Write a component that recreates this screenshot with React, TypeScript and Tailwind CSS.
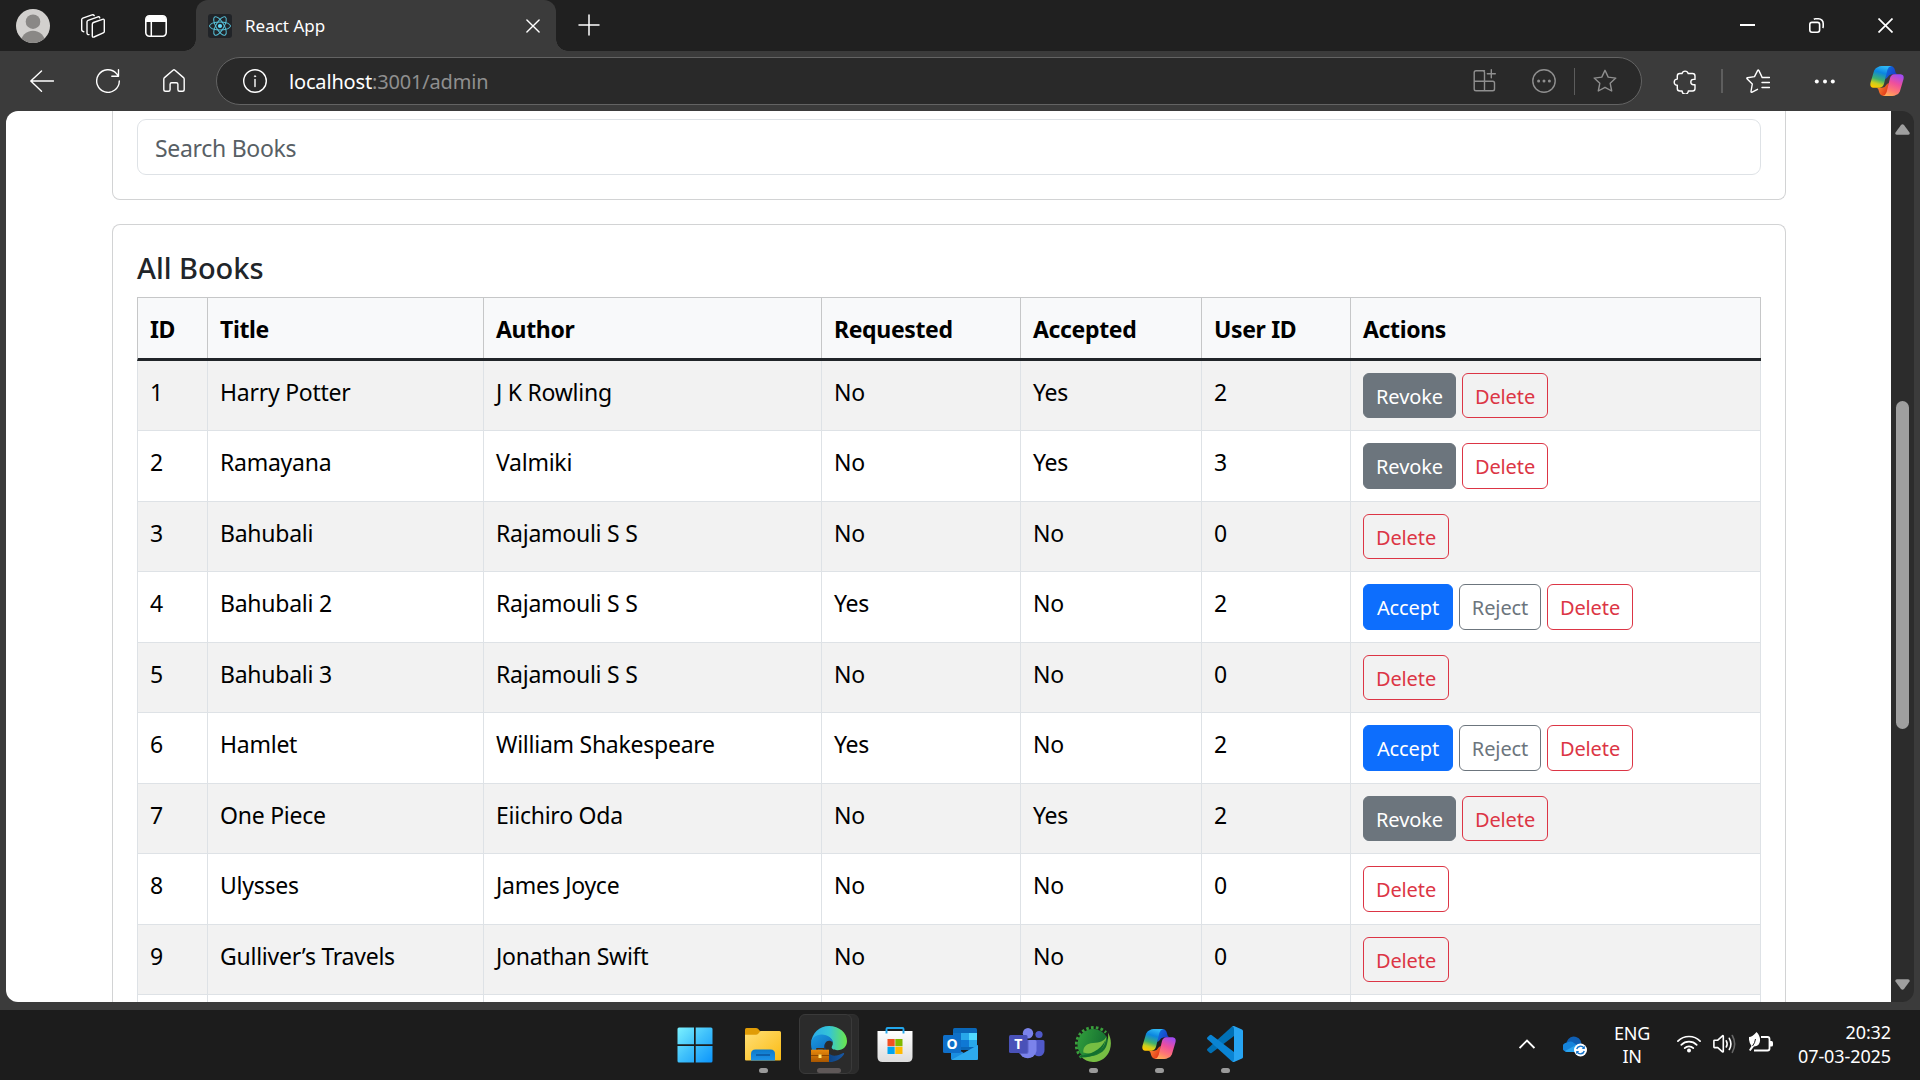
import React from "react";

type Kind = "revoke" | "accept" | "reject" | "delete";

type Book = {
  id: string;
  title: string;
  author: string;
  requested: string;
  accepted: string;
  user: string;
  actions: Kind[];
};

const books: Book[] = [
  { id: "1", title: "Harry Potter", author: "J K Rowling", requested: "No", accepted: "Yes", user: "2", actions: ["revoke", "delete"] },
  { id: "2", title: "Ramayana", author: "Valmiki", requested: "No", accepted: "Yes", user: "3", actions: ["revoke", "delete"] },
  { id: "3", title: "Bahubali", author: "Rajamouli S S", requested: "No", accepted: "No", user: "0", actions: ["delete"] },
  { id: "4", title: "Bahubali 2", author: "Rajamouli S S", requested: "Yes", accepted: "No", user: "2", actions: ["accept", "reject", "delete"] },
  { id: "5", title: "Bahubali 3", author: "Rajamouli S S", requested: "No", accepted: "No", user: "0", actions: ["delete"] },
  { id: "6", title: "Hamlet", author: "William Shakespeare", requested: "Yes", accepted: "No", user: "2", actions: ["accept", "reject", "delete"] },
  { id: "7", title: "One Piece", author: "Eiichiro Oda", requested: "No", accepted: "Yes", user: "2", actions: ["revoke", "delete"] },
  { id: "8", title: "Ulysses", author: "James Joyce", requested: "No", accepted: "No", user: "0", actions: ["delete"] },
  { id: "9", title: "Gulliver’s Travels", author: "Jonathan Swift", requested: "No", accepted: "No", user: "0", actions: ["delete"] },
];

const headings = ["ID", "Title", "Author", "Requested", "Accepted", "User ID", "Actions"];

const columns = "grid grid-cols-[70px_276px_338px_199px_181px_149px_410px]";

const buttonLook: Record<Kind, { label: string; look: string }> = {
  revoke: { label: "Revoke", look: "w-[93px] border-[#6c757d] bg-[#6c757d] text-white" },
  accept: { label: "Accept", look: "w-[90px] border-[#0d6efd] bg-[#0d6efd] text-white" },
  reject: { label: "Reject", look: "w-[82px] border-[#6c757d] text-[#6c757d]" },
  delete: { label: "Delete", look: "w-[86px] border-[#dc3545] text-[#dc3545]" },
};

/* ---------- Browser chrome ---------- */

function LineIcon({ className = "", children }: { className?: string; children: React.ReactNode }) {
  return (
    <svg
      width="24"
      height="24"
      viewBox="0 0 24 24"
      fill="none"
      stroke="currentColor"
      strokeWidth="1.4"
      strokeLinecap="round"
      strokeLinejoin="round"
      className={`shrink-0 ${className}`}
    >
      {children}
    </svg>
  );
}

function Copilot({ id }: { id: string }) {
  return (
    <svg width="34" height="30" viewBox="0 0 102 91" className="shrink-0">
      <defs>
        <linearGradient id={`${id}a`} x1="0.6" y1="0" x2="0.3" y2="1">
          <stop offset="0" stopColor="#2fb8f5" />
          <stop offset="0.3" stopColor="#0b86e0" />
          <stop offset="0.62" stopColor="#3fb170" />
          <stop offset="0.82" stopColor="#c9cf1f" />
          <stop offset="1" stopColor="#ffc800" />
        </linearGradient>
        <linearGradient id={`${id}b`} x1="0" y1="0" x2="1" y2="0.6">
          <stop offset="0" stopColor="#0d7be0" />
          <stop offset="1" stopColor="#1a35c8" />
        </linearGradient>
        <linearGradient id={`${id}c`} x1="0.7" y1="0" x2="0.3" y2="1">
          <stop offset="0" stopColor="#a14bf0" />
          <stop offset="0.4" stopColor="#ee4f9d" />
          <stop offset="0.75" stopColor="#ff7a72" />
          <stop offset="1" stopColor="#ffab58" />
        </linearGradient>
        <linearGradient id={`${id}d`} x1="0" y1="0" x2="1" y2="0.6">
          <stop offset="0" stopColor="#ff9a38" />
          <stop offset="1" stopColor="#e03418" />
        </linearGradient>
      </defs>
      <path d="M44 3Q50 0 62 0Q72 1 75 12L77 20Q79 25 84 25H66Q56 26 53 34L46 40Z" fill={`url(#${id}b)`} />
      <path d="M58 88Q52 91 40 91Q30 90 27 79L25 71Q23 66 18 66H36Q46 65 49 57L56 51Z" fill={`url(#${id}d)`} />
      <path d="M24 3Q28 0 35 0H64Q55 2 52 12L42 54Q39 65 29 66H9Q-2 64 1 51L12 14Q16 5 24 3Z" fill={`url(#${id}a)`} />
      <path d="M78 88Q74 91 67 91H38Q47 89 50 79L60 37Q63 26 73 25H93Q104 27 101 40L90 77Q86 86 78 88Z" fill={`url(#${id}c)`} />
    </svg>
  );
}

function TabStrip() {
  return (
    <div className="flex h-[51px] items-center bg-[#202020] text-white">
      <svg width="34" height="34" viewBox="0 0 34 34" className="ml-4">
        <defs>
          <clipPath id="avatar">
            <circle cx="17" cy="17" r="17" />
          </clipPath>
        </defs>
        <circle cx="17" cy="17" r="17" fill="#d2d0ce" />
        <g clipPath="url(#avatar)" fill="#8a8886">
          <circle cx="17" cy="12.7" r="7.3" />
          <circle cx="17" cy="34" r="12.3" />
        </g>
      </svg>
      <LineIcon className="ml-[31px]">
        <path d="M11.3 10.2Q11.3 9 12.4 8.5L21.5 5.3Q23.3 4.8 23.3 6.3V17.4Q23.3 18.4 22.2 18.9L13 23Q11.3 23.6 11.3 22Z" />
        <path d="M8 20.6Q6 20.8 6 18.8V7.8Q6 6.8 7.1 6.3L17 2.8Q18.5 2.4 18.7 3.8" />
        <path d="M2.8 17.8Q.7 17.6 .7 15.6V5.6Q.7 4.6 1.8 4.1L11 .9Q12.6 .5 13.2 1.6" />
      </LineIcon>
      <LineIcon className="ml-[39px]">
        <rect x="1.8" y="1.8" width="20.4" height="20.4" rx="3.6" strokeWidth="1.6" />
        <path d="M2 8V5.5A3.5 3.5 0 0 1 5.5 2H18.5A3.5 3.5 0 0 1 22 5.5V8Z" fill="currentColor" stroke="none" />
        <path d="M7.3 8V22" strokeWidth="1.5" />
      </LineIcon>
      <div className="relative ml-[28px] flex h-full w-[360px] items-center rounded-t-xl bg-[#3b3b3b]">
        <div className="absolute bottom-0 -left-3 size-3 bg-[radial-gradient(circle_at_0_0,#202020_11.5px,#3b3b3b_12px)]" />
        <div className="absolute -right-3 bottom-0 size-3 bg-[radial-gradient(circle_at_100%_0,#202020_11.5px,#3b3b3b_12px)]" />
        <svg width="24" height="24" viewBox="0 0 24 24" className="ml-3 rounded-[3px] bg-[#212428]" fill="none" stroke="#58c4dc" strokeWidth="1">
          <circle cx="12" cy="12" r="2.1" fill="#61dafb" stroke="none" />
          <ellipse cx="12" cy="12" rx="10.5" ry="4" />
          <ellipse cx="12" cy="12" rx="10.5" ry="4" transform="rotate(60 12 12)" />
          <ellipse cx="12" cy="12" rx="10.5" ry="4" transform="rotate(120 12 12)" />
        </svg>
        <span className="ml-[13px] text-[17px]">React App</span>
        <svg width="14" height="14" viewBox="0 0 14 14" className="mt-px mr-4 ml-auto" stroke="#fff" strokeWidth="1.4" strokeLinecap="round">
          <path d="M.9 .9L13.1 13.1M13.1 .9L.9 13.1" />
        </svg>
      </div>
      <svg width="22" height="22" viewBox="0 0 22 22" className="-mt-0.5 ml-[22px]" stroke="#fff" strokeWidth="1.5" strokeLinecap="round">
        <path d="M11 1V21M1 11H21" />
      </svg>
      <div className="mr-[27px] ml-auto flex items-center gap-[54px]">
        <div className="-mt-px h-0.5 w-[15px] bg-white" />
        <svg width="15" height="15" viewBox="0 0 15 15" fill="none" stroke="#fff" strokeWidth="1.6">
          <rect x=".8" y="4.4" width="9.8" height="9.8" rx="2.2" />
          <path d="M4.8 1.2Q5.6 .8 6.5 .8H9.5A4.7 4.7 0 0 1 14.2 5.5V8.5Q14.2 9.3 13.7 10" />
        </svg>
        <svg width="15" height="15" viewBox="0 0 15 15" stroke="#fff" strokeWidth="1.7">
          <path d="M.5 .5L14.5 14.5M14.5 .5L.5 14.5" />
        </svg>
      </div>
    </div>
  );
}

function Toolbar() {
  return (
    <div className="flex h-[60px] items-center pl-[30px] text-white">
      <LineIcon>
        <path d="M11.5 2L.8 12L11.5 22.2M1 12H23.6" />
      </LineIcon>
      <LineIcon className="ml-[42px]">
        <path d="M23.3 12A11.3 11.3 0 1 1 20.5 4.6L22.3 6.7M22.5 .8V7.2H15.8" />
      </LineIcon>
      <LineIcon className="ml-[42px]">
        <path d="M1.8 10.2Q1.8 9.3 2.5 8.6L11 1.2Q12 .4 13 1.2L21.5 8.6Q22.2 9.3 22.2 10.2V20.5Q22.2 22.3 20.4 22.3H17.6Q15.9 22.3 15.9 20.5V15.3Q15.9 13.8 14.4 13.8H9.6Q8.1 13.8 8.1 15.3V20.5Q8.1 22.3 6.4 22.3H3.6Q1.8 22.3 1.8 20.5Z" />
      </LineIcon>
      <div className="ml-[30px] flex h-12 w-[1426px] shrink-0 items-center rounded-full border border-[#636363] bg-[#292929] pr-6 pl-[26px]">
        <LineIcon>
          <circle cx="12" cy="12" r="11.3" />
          <path d="M12 10.5V17.5" />
          <circle cx="12" cy="7.3" r=".7" fill="currentColor" strokeWidth=".6" />
        </LineIcon>
        <span className="mt-px ml-[22px] text-[20px] tracking-[-0.17px]">
          localhost<span className="text-[#8f8f8f]">:3001/admin</span>
        </span>
        <div className="ml-auto flex items-center text-[#8f8f8f]">
          <LineIcon>
            <path d="M12.5 1.8H4Q2.2 1.8 2.2 3.6V20Q2.2 21.8 4 21.8H20.7Q22.5 21.8 22.5 20V14Q22.5 12.2 20.7 12.2H2.2M12.5 21.8V3.6Q12.5 1.8 10.7 1.8M19.3 .8V8.8M15.3 4.8H23.3" />
          </LineIcon>
          <LineIcon className="ml-[36px]">
            <circle cx="12" cy="12" r="11.2" />
            <g fill="currentColor" stroke="none">
              <circle cx="6.6" cy="12" r="1.5" />
              <circle cx="12" cy="12" r="1.5" />
              <circle cx="17.4" cy="12" r="1.5" />
            </g>
          </LineIcon>
          <div className="ml-[18px] h-[27px] w-px bg-[#5c5c5c]" />
          <LineIcon className="ml-[18px]">
            <path d="M12 1.3L15.2 8.1L22.8 9.1L17.2 14.3L18.7 22L12 18.3L5.3 22L6.8 14.3L1.2 9.1L8.8 8.1Z" />
          </LineIcon>
        </div>
      </div>
      <LineIcon className="mt-px ml-[31px]">
        <path d="M9 3.5A3.2 3.2 0 0 1 15.2 3.5H19.5Q22 3.5 22 6V9.4H20.5A2.7 2.7 0 0 0 20.5 14.8H22V18.5Q22 21 19.5 21H15.3A3.1 3.1 0 0 1 9.1 21H6.8Q4.3 21 4.3 18.5V15.3A3.1 3.1 0 0 1 4.3 9.1V6Q4.3 3.5 6.8 3.5Z" />
      </LineIcon>
      <div className="ml-[24px] h-6 w-0.5 bg-[#5e5e5e]" />
      <LineIcon className="ml-[23px]">
        <path d="M11.5 20.3L5.7 23.3Q5 23.3 5 22.5L6.3 15L1 9.7Q.6 9 1.4 8.7L8.5 7.6L11.7 1.4Q12.2 .6 12.8 1.4L15.8 7.6M16 8.5H23.5M16 13.5H23.5M16 18.5H23.5" />
      </LineIcon>
      <svg width="24" height="24" viewBox="0 0 24 24" className="ml-[43px]" fill="#fff">
        <circle cx="3.8" cy="12.6" r="2" />
        <circle cx="12" cy="12.6" r="2" />
        <circle cx="19.8" cy="12.6" r="2" />
      </svg>
      <div className="ml-[33px]">
        <Copilot id="tb" />
      </div>
    </div>
  );
}

/* ---------- Page ---------- */

function BooksPage() {
  return (
    <div className="h-full w-[1885px] overflow-hidden rounded-l-xl bg-white pl-[106px]">
      <div className="w-[1674px]">
        <div className="flex h-[89px] flex-col rounded-b-lg border border-t-0 border-[#d2d3d4] px-6 pt-2">
          <div className="flex h-14 items-center rounded-[9px] border border-[#dee2e6] pl-[17px]">
            <span className="mt-[3px] text-[23px] tracking-[-0.3px] text-[#585f65]">Search Books</span>
          </div>
        </div>
        <div className="mt-6 flex h-[900px] flex-col rounded-t-lg border border-b-0 border-[#d2d3d4] px-6 pt-[25px]">
          <h5 className="mb-[11px] h-9 text-[29px] leading-9 font-medium tracking-[-0.05px] text-[#212529]">All Books</h5>
          <div className="w-[1624px] text-[23px] leading-9 tracking-[-0.25px] text-black">
            <div className={`${columns} h-16 border-t border-b-[3px] border-l border-t-[#c6c7c8] border-b-[#212529] border-l-[#c6c7c8] bg-[#f8f9fa] font-bold`}>
              {headings.map((h) => (
                <div key={h} className="border-r border-[#c6c7c8] pt-[13px] pl-3 tracking-[-0.35px]">
                  {h}
                </div>
              ))}
            </div>
            {books.map((b, i) => (
              <div
                key={b.id}
                className={`${columns} border-b border-l border-[#dee2e6] ${i % 2 === 0 ? "h-[70px] bg-[#f2f2f2]" : "h-[71px] bg-white"}`}
              >
                {[b.id, b.title, b.author, b.requested, b.accepted, b.user].map((t, c) => (
                  <div key={c} className="border-r border-[#dee2e6] pt-[13px] pl-3">
                    {t}
                  </div>
                ))}
                <div className="flex gap-1.5 border-r border-[#dee2e6] pt-3 pl-3">
                  {b.actions.map((a) => (
                    <button
                      key={a}
                      className={`flex items-center justify-center rounded-md border pt-0.5 text-[20px] leading-[30px] tracking-[-0.1px] ${i % 2 === 0 ? "h-[45px]" : "h-[46px]"} ${buttonLook[a].look}`}
                    >
                      {buttonLook[a].label}
                    </button>
                  ))}
                </div>
              </div>
            ))}
            <div className={`${columns} h-[70px] border-l border-[#dee2e6] bg-white`}>
              {headings.map((h) => (
                <div key={h} className="border-r border-[#dee2e6]" />
              ))}
            </div>
          </div>
        </div>
      </div>
    </div>
  );
}

function Scrollbar() {
  return (
    <div className="flex w-[23px] flex-col items-center rounded-r-xl bg-[#2c2c2c]">
      <svg width="15" height="11" viewBox="0 0 15 11" className="mt-[13px]" fill="#9f9f9f">
        <path d="M6 1Q7.5 -.6 9 1L14.5 8.5Q15.2 10.6 13 10.8H2Q-.2 10.6 .5 8.5Z" />
      </svg>
      <div className="mt-[266px] h-[328px] w-[13px] rounded-full bg-[#9f9f9f]" />
      <svg width="15" height="11" viewBox="0 0 15 11" className="mt-auto mb-[12px]" fill="#9f9f9f">
        <path d="M6 10Q7.5 11.6 9 10L14.5 2.5Q15.2 .4 13 .2H2Q-.2 .4 .5 2.5Z" />
      </svg>
    </div>
  );
}

/* ---------- Taskbar ---------- */

function WindowsIcon() {
  return (
    <svg width="36" height="36" viewBox="0 0 36 36" className="mt-px mr-1 -mb-px">
      <defs>
        <linearGradient id="win" x1="0" y1="0" x2="36" y2="36" gradientUnits="userSpaceOnUse">
          <stop offset="0" stopColor="#7df3ff" />
          <stop offset="0.5" stopColor="#3fc0fb" />
          <stop offset="1" stopColor="#0a93fb" />
        </linearGradient>
      </defs>
      <path fill="url(#win)" d="M2 .5H17V17.3H.5V2Q.5 .5 2 .5ZM18.7 .5H34Q35.5 .5 35.5 2V17.3H18.7ZM.5 19H17V35.5H2Q.5 35.5 .5 34ZM18.7 19H35.5V34Q35.5 35.5 34 35.5H18.7Z" />
    </svg>
  );
}

function ExplorerIcon() {
  return (
    <svg width="36" height="36" viewBox="0 0 36 36">
      <defs>
        <linearGradient id="fold" x1="0" y1="0" x2="1" y2="1">
          <stop offset="0" stopColor="#ffdf76" />
          <stop offset="1" stopColor="#fbbb13" />
        </linearGradient>
        <linearGradient id="foldb" x1="0" y1="0" x2="0" y2="1">
          <stop offset="0" stopColor="#0d79c9" />
          <stop offset="1" stopColor="#1d92e8" />
        </linearGradient>
      </defs>
      <path d="M0 3.5Q0 2 1.5 2H11Q12.2 2 13 2.8L15.5 5.5V10H0Z" fill="#e09c06" />
      <path d="M0 8.8H11Q12.2 8.8 13 8L15.5 5H34.5Q36 5 36 6.5V33.5Q36 34.5 35 34.5H1Q0 34.5 0 33.5Z" fill="url(#fold)" />
      <path d="M6 34.5V28Q6 23.5 10.5 23.5H25.5Q30 23.5 30 28V34.5Z" fill="url(#foldb)" />
      <path d="M11 29H25" stroke="#0b559c" strokeWidth="1.5" />
    </svg>
  );
}

function EdgeIcon() {
  return (
    <svg width="36" height="36" viewBox="0 0 36 36">
      <defs>
        <linearGradient id="edgeTop" x1="0" y1="0.5" x2="1" y2="0.5">
          <stop offset="0" stopColor="#2aa9e8" />
          <stop offset="0.5" stopColor="#34c4d8" />
          <stop offset="1" stopColor="#6be84a" />
        </linearGradient>
        <linearGradient id="edgeMid" x1="0" y1="0" x2="0.6" y2="1">
          <stop offset="0" stopColor="#1b9de2" />
          <stop offset="1" stopColor="#0c5fb5" />
        </linearGradient>
        <linearGradient id="edgeLow" x1="0" y1="0" x2="1" y2="0">
          <stop offset="0" stopColor="#0a3d78" />
          <stop offset="1" stopColor="#1859a6" />
        </linearGradient>
        <linearGradient id="case" x1="0" y1="0" x2="0" y2="1">
          <stop offset="0" stopColor="#e88a0c" />
          <stop offset="1" stopColor="#a85600" />
        </linearGradient>
      </defs>
      <path d="M0 17C.8 7 8.5 0 18 0C28.5 0 36 7 36 15C36 20.5 32 24.3 26.5 24.3C22 24.3 20 22.5 20.9 20.6C22.5 18 22.2 15 19.5 12.5C14 7 3 9 0 17Z" fill="url(#edgeTop)" />
      <path d="M0 18C0 12 5 8.6 10.5 8.6C17 8.6 21.5 12.5 22 16.5C19 13.5 14.5 14.5 13.5 19C12.5 25 16 32 22 35.5C10 38 0 29.5 0 18Z" fill="url(#edgeMid)" />
      <path d="M14.2 17.5C13 26 19.5 30.5 25.5 29.5C28.5 29 31 27.5 32.3 27C33.3 26.6 33.3 27.6 32.8 28.5C30 33 24.5 36 18.5 36C13 33 11.5 22 14.2 17.5Z" fill="url(#edgeLow)" />
      <path d="M6 24V22.7H12.5V24" fill="none" stroke="#4a2b0c" strokeWidth="1.5" />
      <rect x="0" y="23.7" width="18" height="12.3" fill="url(#case)" />
      <path d="M0 29.5H18" stroke="#8c4700" strokeWidth="1" />
      <rect x="7.5" y="28.5" width="3" height="3.5" fill="#ffe26b" />
    </svg>
  );
}

function StoreIcon() {
  return (
    <svg width="36" height="36" viewBox="0 0 36 36">
      <defs>
        <linearGradient id="store" x1="0" y1="0" x2="0" y2="1">
          <stop offset="0" stopColor="#ffffff" />
          <stop offset="1" stopColor="#dcdcdc" />
        </linearGradient>
      </defs>
      <path d="M.5 5H35.5V31Q35.5 36 30.5 36H5.5Q.5 36 .5 31Z" fill="url(#store)" />
      <path d="M9.5 7.5V3Q9.5 2 10.5 2H25.5Q26.5 2 26.5 3V7.5" fill="none" stroke="#22a7ec" strokeWidth="1.9" />
      <rect x="10.5" y="13" width="7.2" height="7.2" fill="#f25022" />
      <rect x="18.3" y="13" width="7.2" height="7.2" fill="#7fba00" />
      <rect x="10.5" y="20.8" width="7.2" height="7.2" fill="#00a4ef" />
      <rect x="18.3" y="20.8" width="7.2" height="7.2" fill="#ffb900" />
    </svg>
  );
}

function OutlookIcon() {
  return (
    <svg width="36" height="36" viewBox="0 0 36 36">
      <rect x="10" y="2" width="24" height="22" rx="1.5" fill="#0a67b8" />
      <path d="M10 7H18V14H10Z" fill="#1071c4" />
      <path d="M18 7H26V14H18Z" fill="#28a8ea" />
      <path d="M26 7H34V14H26Z" fill="#50d9ff" />
      <path d="M18 14H26V21H18Z" fill="#0f78d4" />
      <path d="M26 14H34V21H26Z" fill="#28a8ea" />
      <path d="M10 14H18V24H10Z" fill="#0a4f94" />
      <path d="M8 20L21 27L35 19V32.5Q35 34 33.5 34H9.5Q8 34 8 32.5Z" fill="#1a8ee0" />
      <path d="M35 19L9 33.5Q9.5 34 10 34H33.5Q35 34 35 32.5Z" fill="#35b3f2" opacity=".75" />
      <rect x="0" y="9" width="18" height="18" rx="1.5" fill="#0f6fc9" />
      <text x="9" y="23" textAnchor="middle" fill="#fff" className="text-[14px] font-bold">O</text>
    </svg>
  );
}

function TeamsIcon() {
  return (
    <svg width="36" height="36" viewBox="0 0 36 36">
      <circle cx="30" cy="8.5" r="3.6" fill="#5059c9" />
      <path d="M24 14H34Q35.5 14 35.5 15.5V24A5.7 5.7 0 0 1 24 25Z" fill="#5059c9" />
      <circle cx="19" cy="7.2" r="5.2" fill="#7b83eb" />
      <path d="M11 14H26Q27.5 14 27.5 15.5V25A8.9 8.9 0 0 1 10 25Z" fill="#7b83eb" />
      <path d="M10 14H19.5V26Q19.5 28 17.5 28H10.5Z" fill="#5c63c7" />
      <rect x="0" y="9" width="18.5" height="18" rx="1.5" fill="#4951b8" />
      <text x="9.2" y="22.9" textAnchor="middle" fill="#fff" className="text-[14px] font-bold">T</text>
    </svg>
  );
}

function SpringIcon() {
  return (
    <svg width="36" height="36" viewBox="0 0 36 36">
      <defs>
        <linearGradient id="gear" x1="0" y1="0.3" x2="1" y2="0.6">
          <stop offset="0" stopColor="#2f9c3c" />
          <stop offset="1" stopColor="#11682f" />
        </linearGradient>
      </defs>
      <path d="M6.5 31.5A17 17 0 0 1 31 6.5" fill="none" stroke="#3aa03c" strokeWidth="2.8" strokeDasharray="2.6 2.2" />
      <circle cx="18" cy="18.5" r="15.5" fill="url(#gear)" />
      <path d="M33 6.5C36 12 36.8 18 34.8 24C32 32 25 36.3 18 36C13 35.8 9 34 6 30.5C13 31.5 27 30 31 21C33 16 33.5 11 33 6.5Z" fill="#76be43" />
      <path d="M31.5 10C30 15 25 16.5 18 17C11 17.5 8 21 8.3 26.5C18 29 30 27 31.5 10Z" fill="#76be43" />
      <path d="M4 30C15 28.5 25 25 30.5 14C28 27 17 32 5.5 31.5Z" fill="#11702f" />
    </svg>
  );
}

function VsCodeIcon() {
  return (
    <svg width="36" height="36" viewBox="0 0 36 36">
      <path d="M27 0L27 10L4.5 27Q3.5 27.6 2.6 26.8L.5 24.8Q-.5 23.8 .5 22.8L24.5 1Z" fill="#0070b5" />
      <path d="M27 36L27 26L4.5 9Q3.5 8.4 2.6 9.2L.5 11.2Q-.5 12.2 .5 13.2L24.5 35Z" fill="#0a84d4" />
      <path d="M27 0L35 3.5Q36 4 36 5V31Q36 32 35 32.5L27 36Q25.5 36 24.5 35Q27 36 27 33V3Q27 0 24.5 1Q25.5 0 27 0Z" fill="#27a4f2" />
    </svg>
  );
}

function TaskCell({ children, dot = true }: { children: React.ReactNode; dot?: boolean }) {
  return (
    <div className="flex h-[66px] w-[66px] flex-col items-center pt-[16px]">
      {children}
      {dot && <div className="mt-1.5 h-[5px] w-[9px] rounded-full bg-[#9a9a9a]" />}
    </div>
  );
}

function Taskbar() {
  return (
    <div className="flex h-[70px] items-start bg-[#1c1c1c] pl-[664px] text-white">
      <TaskCell dot={false}>
        <WindowsIcon />
      </TaskCell>
      <TaskCell>
        <ExplorerIcon />
      </TaskCell>
      <div className="flex h-[66px] w-[66px] pt-1 pl-[3px]">
        <div className="relative z-10 flex h-[60px] w-[53px] flex-col items-center rounded-md border border-[#3a3a3a] bg-[#2b2b2b] pt-[11px] pl-[7px]">
          <EdgeIcon />
          <div className="mt-1.5 h-[5px] w-6 rounded-full bg-[#5f5858]" />
        </div>
        <div className="-ml-1 h-[60px] w-[11px] rounded-r-md border border-[#303030] bg-[#2b2b2b]" />
      </div>
      <TaskCell dot={false}>
        <StoreIcon />
      </TaskCell>
      <TaskCell dot={false}>
        <OutlookIcon />
      </TaskCell>
      <TaskCell dot={false}>
        <TeamsIcon />
      </TaskCell>
      <TaskCell>
        <SpringIcon />
      </TaskCell>
      <TaskCell>
        <div className="flex h-9 items-center">
          <Copilot id="task" />
        </div>
      </TaskCell>
      <TaskCell>
        <VsCodeIcon />
      </TaskCell>
      <div className="mr-[29px] ml-auto flex h-[68px] items-center">
        <svg width="16" height="10" viewBox="0 0 16 10" className="mr-[28px]" fill="none" stroke="#fff" strokeWidth="1.8">
          <path d="M.6 9L8 1.5L15.4 9" />
        </svg>
        <svg width="24" height="21" viewBox="0 0 24 21" className="mt-1 mr-[27px]">
          <path d="M4 11A7.5 7.5 0 0 1 17.5 4.5L19 9L12 13Z" fill="#0f5fb4" />
          <path d="M4.5 16A4.7 4.7 0 0 1 4 6.5Q8 4.5 11 7L18 12L14 16Z" fill="#1584dc" />
          <path d="M2 15L12 9.5Q17 7 20 9L18 16H5Q3 16 2 15Z" fill="#2ba4ee" />
          <circle cx="17.5" cy="14" r="6.5" fill="#fff" />
          <path d="M13.7 13A4 4 0 0 1 21 12.2M21.3 15A4 4 0 0 1 14 15.8" fill="none" stroke="#1273cc" strokeWidth="1.4" />
          <path d="M21.8 9.8V13H18.8ZM13.2 18.2V15H16.2Z" fill="#1273cc" />
        </svg>
        <div className="mt-px mr-[27px] flex w-9 flex-col items-center text-[18px] leading-[23px] tracking-[-0.3px]">
          <span>ENG</span>
          <span>IN</span>
        </div>
        <svg width="24" height="18" viewBox="0 0 24 18" className="mr-3" fill="none" stroke="#fff" strokeWidth="1.7" strokeLinecap="round">
          <path d="M.9 6.2A15.5 15.5 0 0 1 23.1 6.2M4.3 9.8A10.8 10.8 0 0 1 19.7 9.8M7.7 13.1A6 6 0 0 1 16.3 13.1" />
          <circle cx="12" cy="15.5" r="2" fill="#fff" stroke="none" />
        </svg>
        <svg width="24" height="20" viewBox="0 0 24 20" className="mr-3" fill="none" stroke="#fff" strokeWidth="1.6" strokeLinecap="round" strokeLinejoin="round">
          <path d="M.9 6.8Q.9 6.2 1.5 6.2H4.8L9.5 1.8Q10.3 1.4 10.3 2.2V17.4Q10.3 18.2 9.5 17.8L4.8 13.6H1.5Q.9 13.6 .9 13Z" />
          <path d="M13.3 6.8Q15 9.9 13.3 13M16.3 4.3Q19.5 9.9 16.3 15.5" />
          <path d="M19.3 1.5Q24 9.9 19.3 18.3" stroke="#666" />
        </svg>
        <svg width="24" height="20" viewBox="0 0 24 20" className="mr-[25px] mb-1">
          <path d="M12 5H18.5Q20.5 5 20.5 7V16.5Q20.5 18.5 18.5 18.5H5" fill="none" stroke="#fff" strokeWidth="1.8" />
          <path d="M21 9H22.5Q24 9 24 10.5V13Q24 14.5 22.5 14.5H21Z" fill="#fff" />
          <path d="M7.5 0Q11.5 4 11 9Q10.5 14 5 14.5L1.5 19L0 18L2.5 14Q-.5 10 0 5Q3.5 5 7.5 0Z" fill="#fff" />
          <path d="M6.5 7Q6 11 3.5 14" stroke="#1c1c1c" strokeWidth="1" fill="none" />
        </svg>
        <div className="flex w-[93px] flex-col items-end text-[18px] leading-6 tracking-[-0.1px] whitespace-nowrap">
          <span>20:32</span>
          <span>07-03-2025</span>
        </div>
      </div>
    </div>
  );
}

export default function App() {
  return (
    <div className="flex h-[1080px] w-[1920px] flex-col overflow-hidden bg-[#3b3b3b] font-['Noto_Sans','Open_Sans',sans-serif]">
      <TabStrip />
      <Toolbar />
      <div className="flex h-[891px] pl-1.5">
        <BooksPage />
        <Scrollbar />
      </div>
      <div className="h-2 shrink-0" />
      <Taskbar />
    </div>
  );
}
